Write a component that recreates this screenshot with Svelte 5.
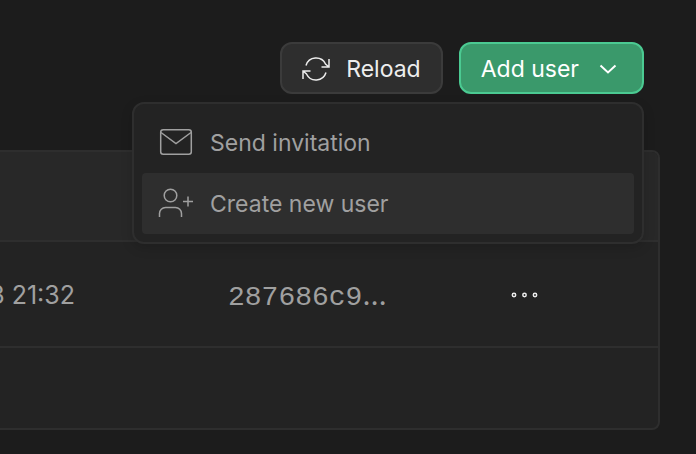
<script lang="ts">
  let open = $state(true);
  let active = $state('create');

  const users = [{ lastSignIn: '3 21:32', uid: '287686c9' }];
</script>

<main class="page">
  <div class="toolbar">
    <button class="button" type="button">
      <svg class="reload" viewBox="0 0 28 28" aria-hidden="true">
        <path d="M4 10.500a10.500 10.500 0 0 1 19.500-1.500l3.500 3M27 4v8h-7.500M24 17.500a10.500 10.500 0 0 1-19.500 1.500L1 16M1 24v-8h7.500" />
      </svg>
      Reload
    </button>

    <div class="dropdown">
      <button
        class="button primary"
        type="button"
        aria-haspopup="menu"
        aria-expanded={open}
        onclick={() => (open = !open)}
      >
        Add user
        <svg class="chevron" viewBox="0 0 18 10" aria-hidden="true">
          <path d="M1.500 1.500 9 8.500l7.500-7" />
        </svg>
      </button>

      {#if open}
        <div class="menu" role="menu">
          <button
            class="item"
            class:active={active === 'invite'}
            type="button"
            role="menuitem"
            onmouseenter={() => (active = 'invite')}
          >
            <svg viewBox="0 0 36 32" aria-hidden="true">
              <rect x="2.700" y="2.700" width="30.600" height="24.600" rx="2.500" />
              <path d="M3 5.500 18 16.500l15-11" />
            </svg>
            Send invitation
          </button>
          <button
            class="item"
            class:active={active === 'create'}
            type="button"
            role="menuitem"
            onmouseenter={() => (active = 'create')}
          >
            <svg viewBox="0 0 36 32" aria-hidden="true">
              <circle cx="12.500" cy="7.500" r="6.300" />
              <path d="M1.500 29v-3.500a6 6 0 0 1 6-6h10a6 6 0 0 1 6 6V29M30 8.500v10M25 13.500h10" />
            </svg>
            Create new user
          </button>
        </div>
      {/if}
    </div>
  </div>

  <section class="panel">
    <table>
      <thead>
        <tr>
          <th class="date"></th>
          <th class="uid"></th>
          <th class="actions"></th>
        </tr>
      </thead>
      <tbody>
        {#each users as user}
          <tr>
            <td class="date">{user.lastSignIn}</td>
            <td class="uid">{user.uid}<span>…</span></td>
            <td class="actions">
              <button class="more" type="button" aria-label="User actions">
                <svg viewBox="0 0 28 8" aria-hidden="true">
                  <circle cx="4" cy="4" r="1.700" />
                  <circle cx="14.500" cy="4" r="1.700" />
                  <circle cx="25" cy="4" r="1.700" />
                </svg>
              </button>
            </td>
          </tr>
        {/each}
      </tbody>
    </table>
    <div class="footer"></div>
  </section>
</main>

<style>
  :global(body) {
    margin: 0;
    background: #1c1c1c;
  }

  .page {
    font-family: Inter, 'Liberation Sans', sans-serif;
    color: #a0a0a0;
    padding: 42px 36px 24px 0;
    overflow: hidden;
  }

  .toolbar {
    display: flex;
    justify-content: flex-end;
    gap: 16px;
    padding-right: 16px;
    margin-bottom: 56px;
  }

  button {
    font: inherit;
    color: inherit;
    background: none;
    border: 0;
    cursor: pointer;
  }

  svg {
    display: block;
    flex: none;
    fill: none;
    stroke: currentColor;
    stroke-width: 1.5;
  }

  .button {
    box-sizing: border-box;
    display: flex;
    align-items: center;
    height: 52px;
    padding: 2px 20px 0;
    gap: 16px;
    font-size: 23px;
    line-height: 32px;
    color: #ededed;
    background: #2e2e2e;
    border: 2px solid #3b3b3b;
    border-radius: 12px;
  }

  .primary {
    gap: 20px;
    padding-right: 25px;
    color: #fff;
    background: #3a996b;
    border-color: #4bca92;
  }

  .reload {
    width: 28px;
    height: 28px;
  }

  .chevron {
    width: 18px;
    height: 10px;
    stroke-width: 2;
  }

  .dropdown {
    position: relative;
  }

  .menu {
    position: absolute;
    z-index: 1;
    top: calc(100% + 8px);
    right: 0;
    box-sizing: border-box;
    width: 512px;
    padding: 8px;
    background: #232323;
    border: 2px solid #2e2e2e;
    border-radius: 12px;
    box-shadow: 0 4px 12px rgba(0, 0, 0, 0.15);
  }

  .item {
    display: flex;
    align-items: center;
    gap: 16px;
    width: 100%;
    height: 61px;
    padding: 0 16px;
    font-size: 23px;
    line-height: 32px;
    border-radius: 4px;
  }

  .item svg {
    width: 36px;
    height: 32px;
  }

  .active {
    background: #2e2e2e;
  }

  .panel {
    margin-left: -16px;
    background: #232323;
    border: 2px solid #2e2e2e;
    border-radius: 8px;
    overflow: hidden;
  }

  table {
    width: 100%;
    table-layout: fixed;
    border-collapse: separate;
    border-spacing: 0;
  }

  th,
  td {
    box-sizing: border-box;
    padding: 0;
    text-align: left;
    border-bottom: 2px solid #2e2e2e;
  }

  th {
    height: 90px;
    background: #282828;
  }

  td {
    height: 106px;
    padding-top: 2px;
  }

  td.date {
    padding-right: 153px;
    font-size: 25px;
    text-align: right;
    white-space: nowrap;
  }

  .uid {
    width: 282px;
    font-family: 'Liberation Mono', monospace;
    font-size: 28px;
  }

  .uid span {
    font-family: Inter, sans-serif;
    font-size: 28px;
  }

  .actions {
    width: 148px;
  }

  .more {
    display: block;
    padding: 0;
    color: #ededed;
  }

  .more svg {
    width: 28px;
    height: 8px;
  }

  .footer {
    height: 80px;
  }
</style>
